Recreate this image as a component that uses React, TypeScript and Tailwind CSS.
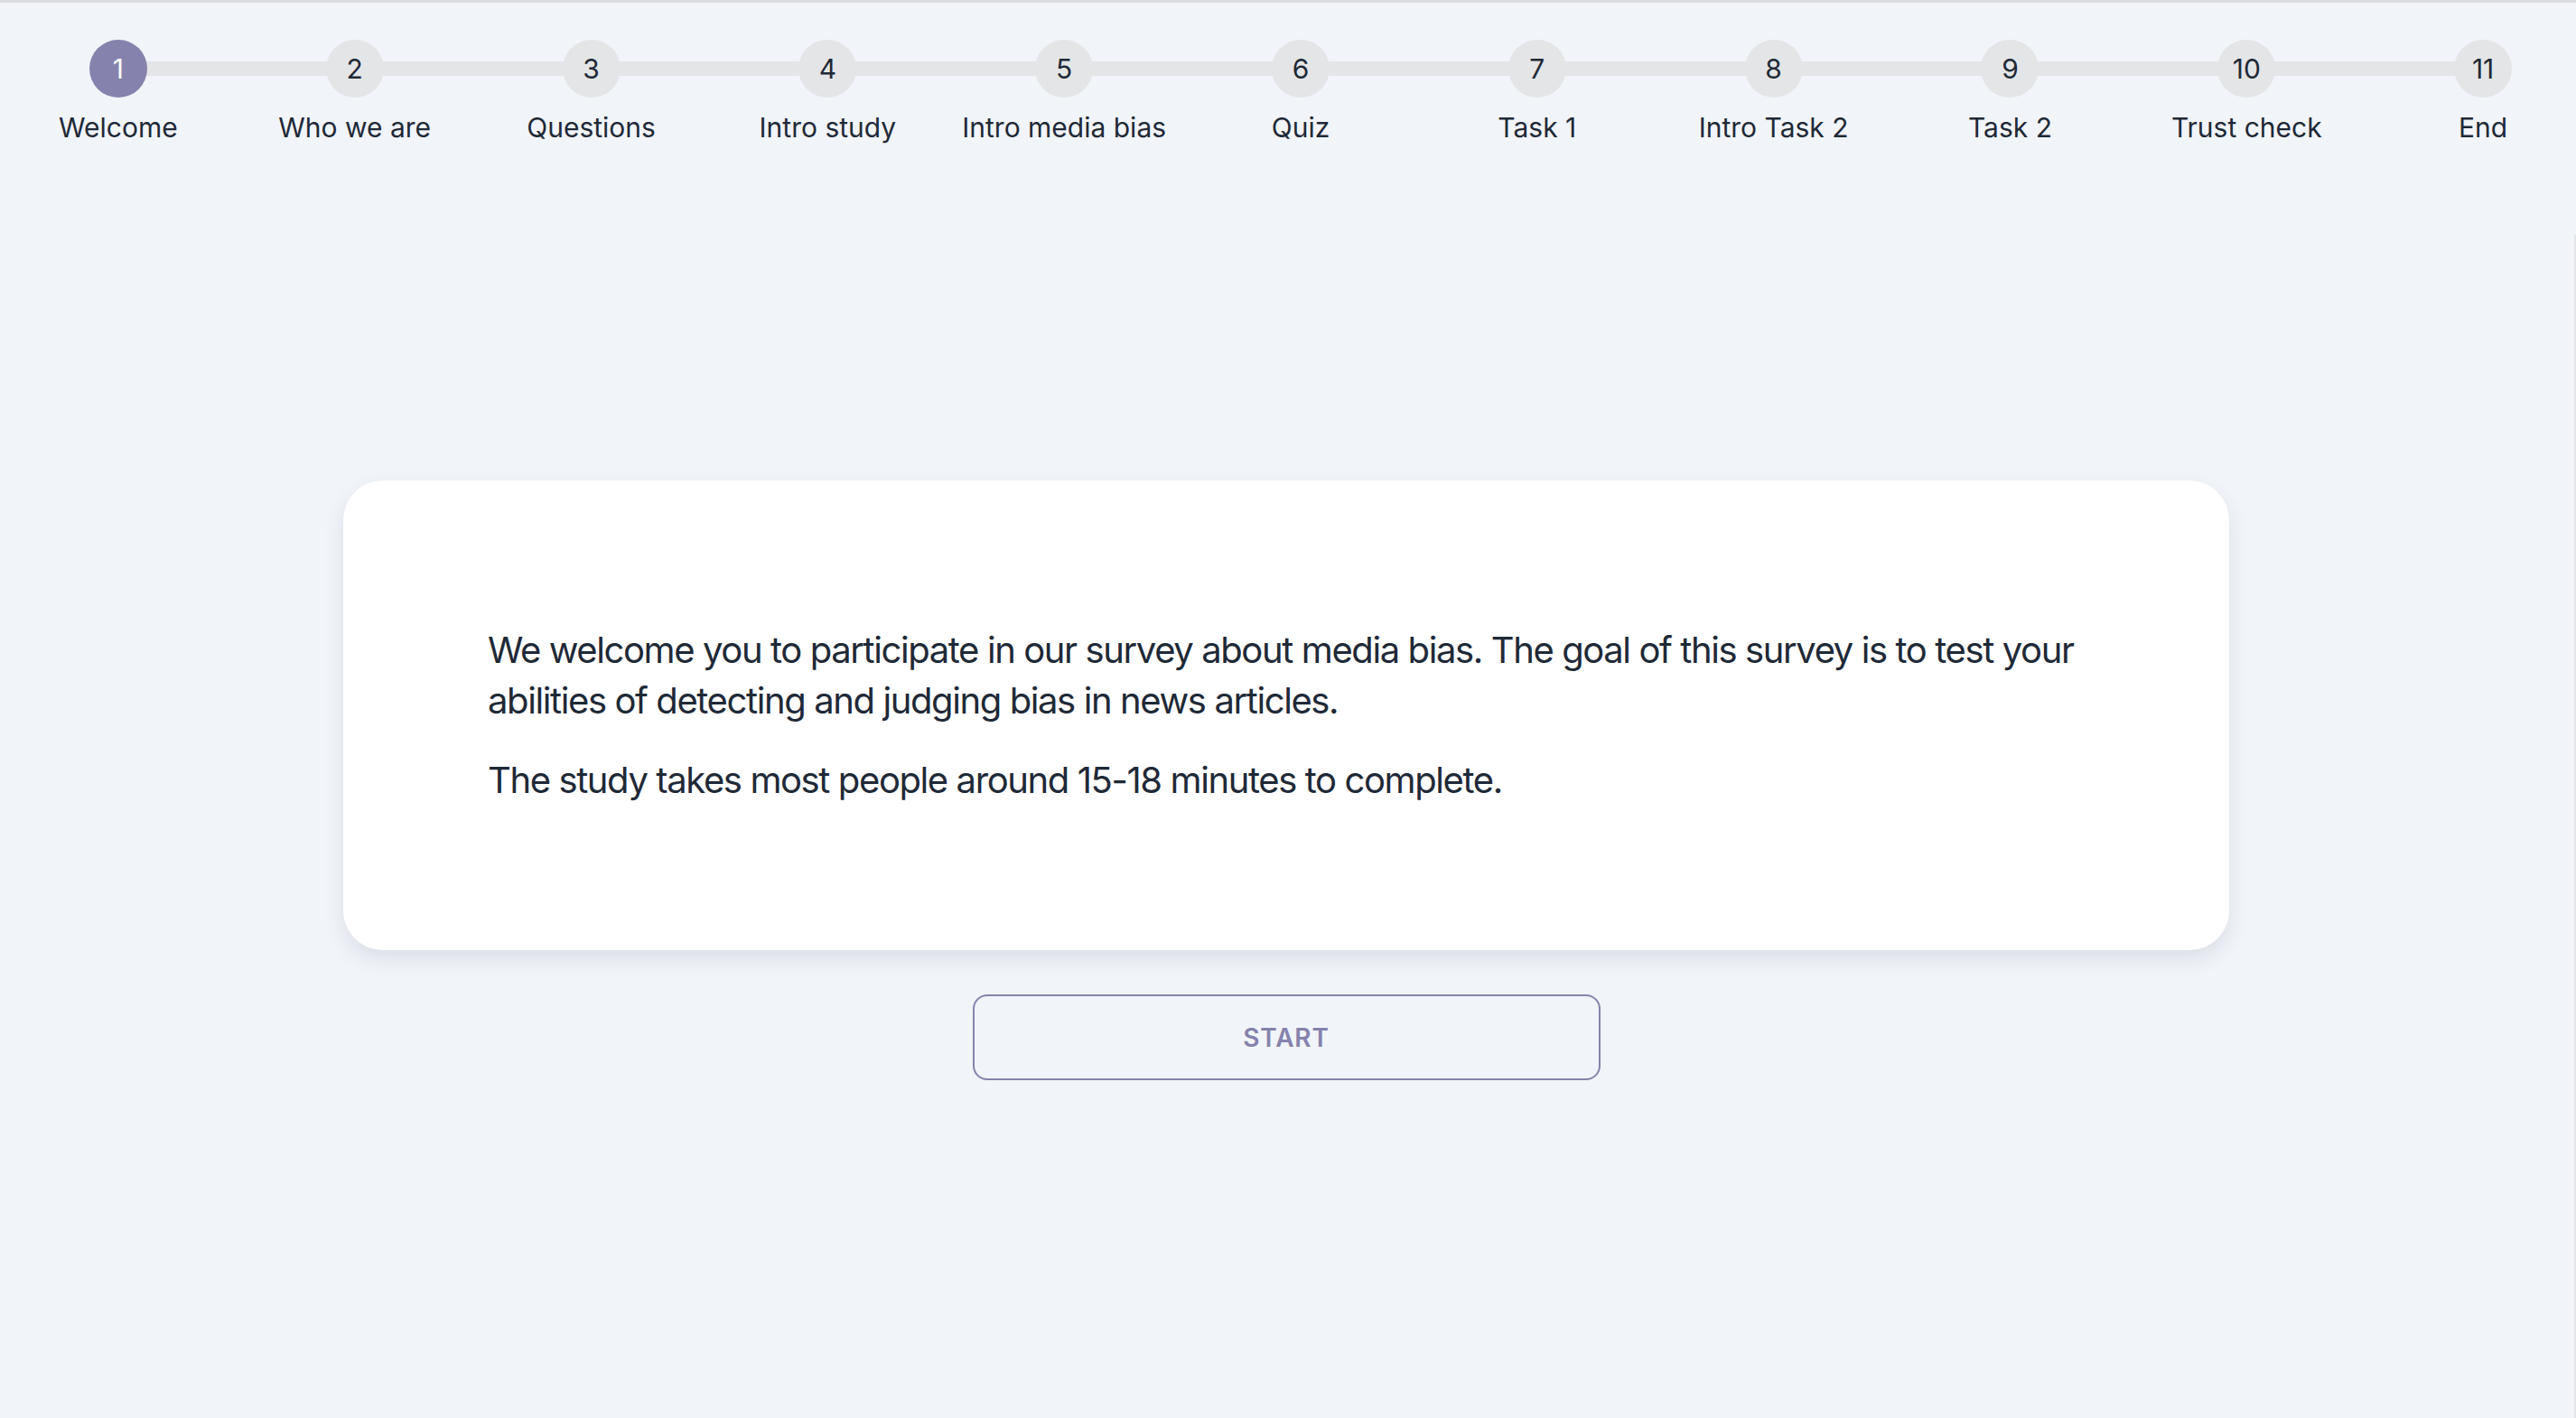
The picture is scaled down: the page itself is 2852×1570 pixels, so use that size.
import clsx from "clsx";

const steps = [
  "Welcome",
  "Who we are",
  "Questions",
  "Intro study",
  "Intro media bias",
  "Quiz",
  "Task 1",
  "Intro Task 2",
  "Task 2",
  "Trust check",
  "End",
];

function Stepper({ active }: { active: number }) {
  return (
    <nav className="relative mt-[41px] grid w-[2880px] grid-cols-11">
      {/* connector line behind the circles */}
      <div className="absolute left-[131px] right-[131px] top-[24px] h-4 bg-[#e4e5e6]" />
      {steps.map((label, i) => (
        <div key={label} className="relative flex flex-col items-center">
          <div
            className={clsx(
              "flex h-16 w-16 items-center justify-center rounded-full text-[30px] leading-none",
              i === active ? "bg-[#8582ad] text-white" : "bg-[#e4e5e6] text-[#1f2937]"
            )}
          >
            {i + 1}
          </div>
          <span className="mt-[15px] whitespace-nowrap text-[30px] leading-[36px]">{label}</span>
        </div>
      ))}
    </nav>
  );
}

export default function App() {
  return (
    <div className="relative min-h-screen overflow-hidden border-t-[3px] border-[#dcdde0] bg-[#f1f4f9] font-['Inter',sans-serif] text-[#1f2937]">
      <Stepper active={0} />

      <main className="flex flex-col items-center pr-1">
        <section className="mt-[373px] w-[2088px] rounded-[44px] bg-white py-[160px] pl-[160px] pr-[130px] text-[40px] leading-[56px] tracking-[-0.035em] shadow-[0_10px_24px_rgba(15,23,42,0.09)]">
          <p>
            We welcome you to participate in our survey about media bias. The goal of this survey is to test your
            abilities of detecting and judging bias in news articles.
          </p>
          <p className="mt-8">The study takes most people around 15-18 minutes to complete.</p>
        </section>

        <button className="mt-[49px] flex h-[95px] w-[695px] items-center justify-center rounded-[16px] border-2 border-[#8582ad] text-[28px] font-semibold uppercase tracking-[0.03em] text-[#8582ad]">
          Start
        </button>
      </main>

      <div className="absolute bottom-0 right-0 top-[257px] w-[2px] bg-[#e4e4e7]" />
    </div>
  );
}
